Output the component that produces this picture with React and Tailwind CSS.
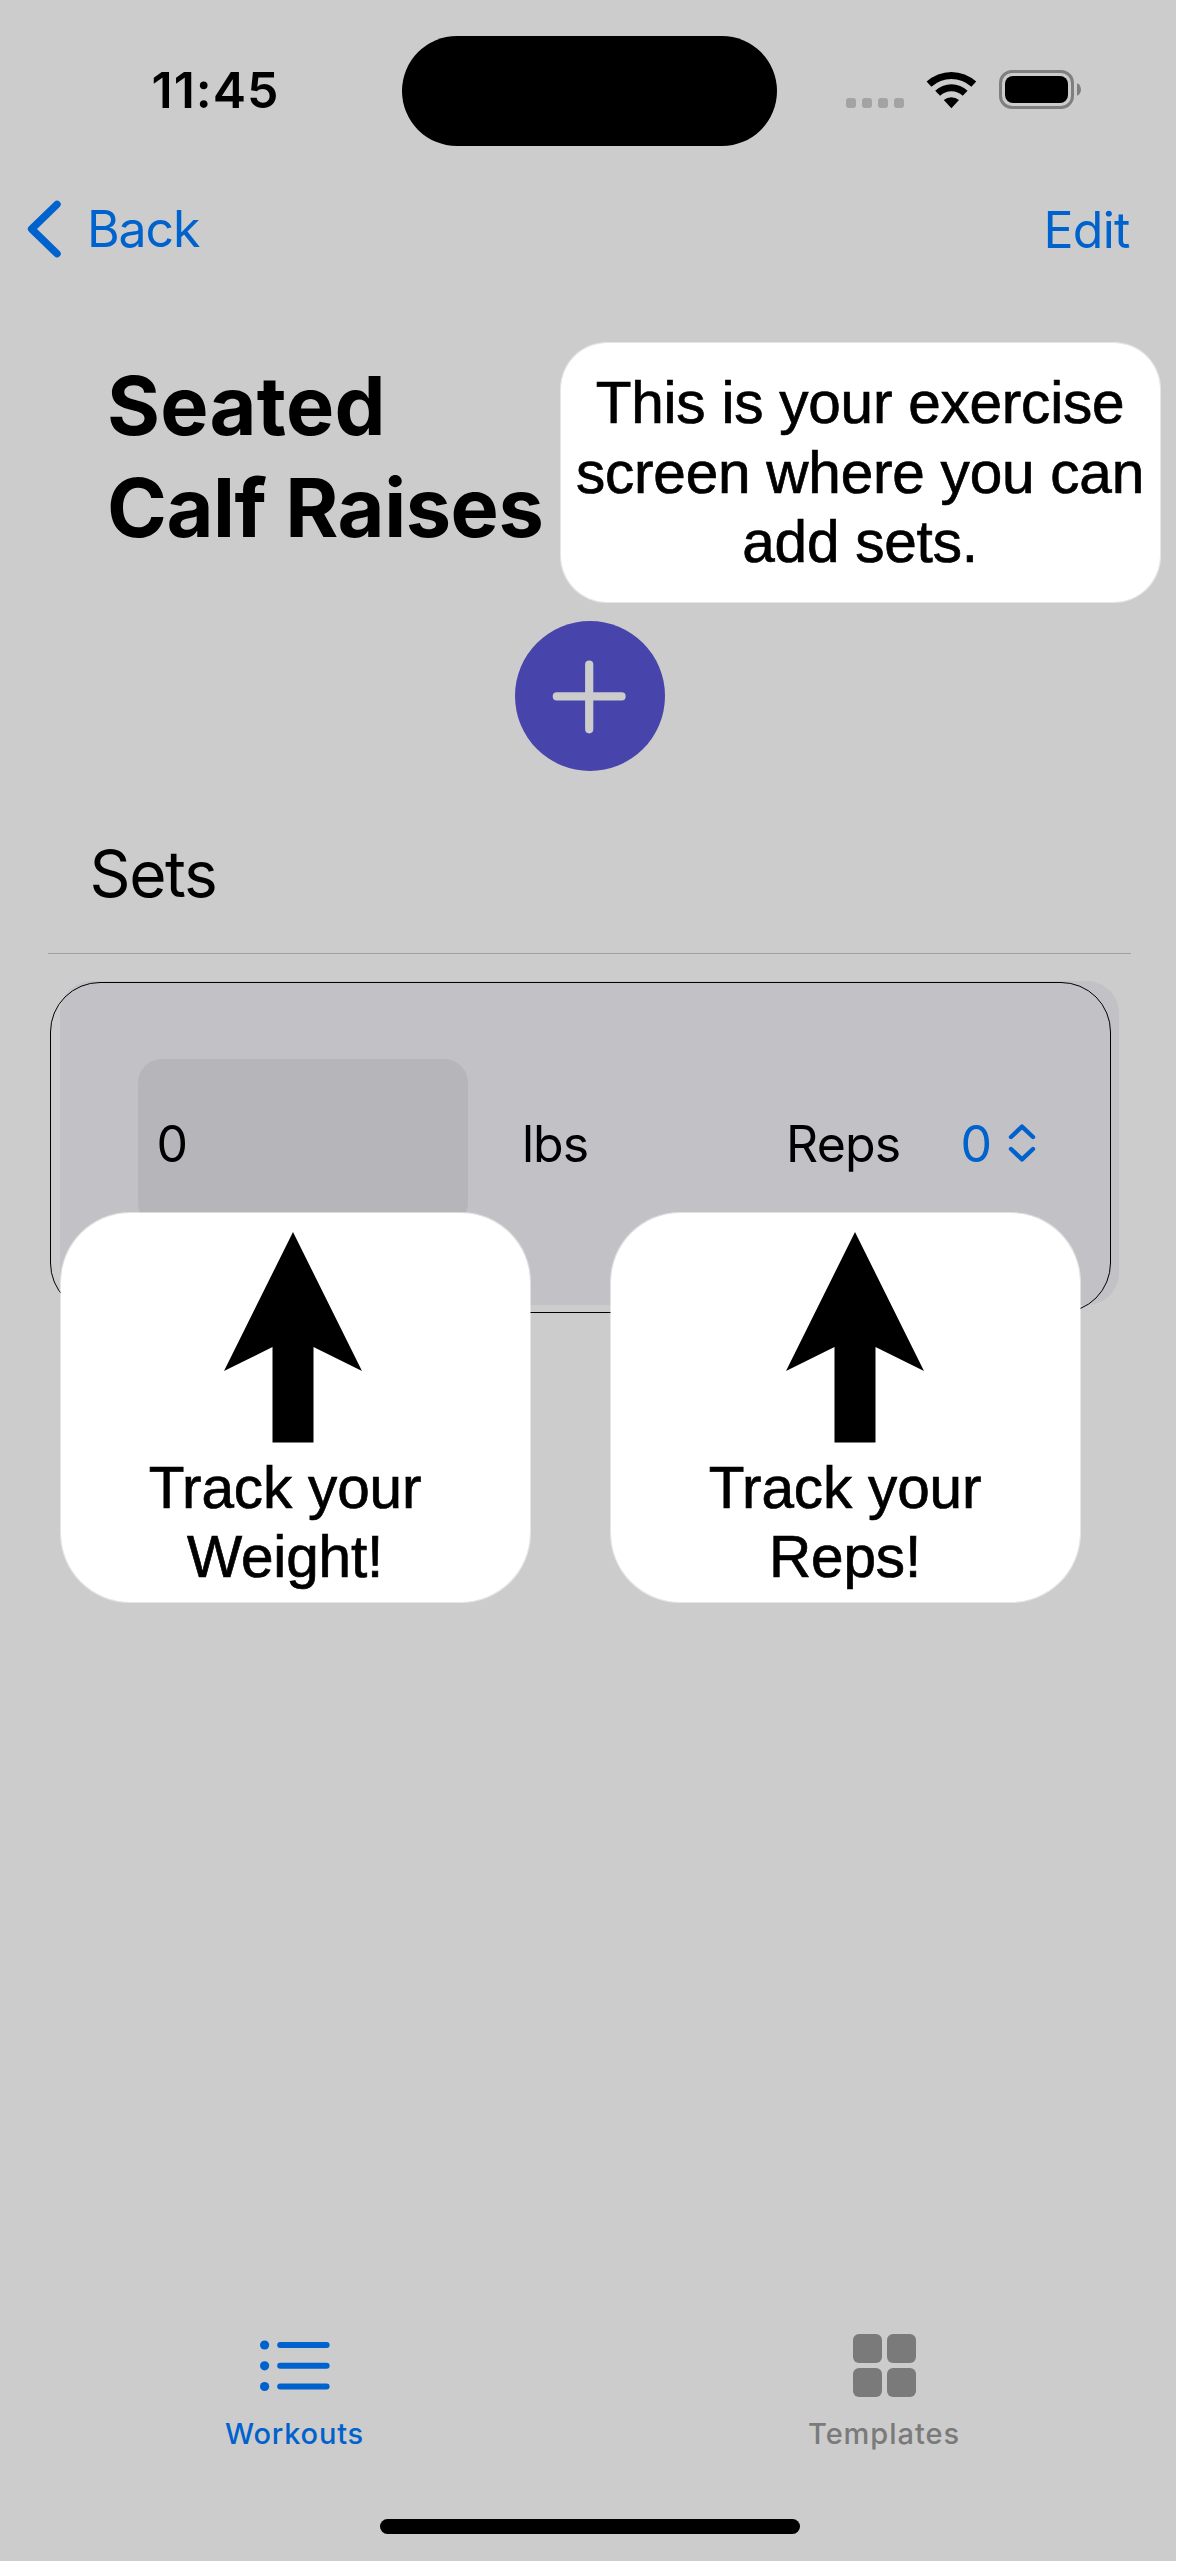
import React from "react";

const BLUE = "#0062cc";

function WifiIcon() {
  return (
    <svg width="51" height="38" viewBox="0 0 51 38" fill="#000">
      <path d="M0.6 10.6 A36.5 36.5 0 0 1 50.2 10.6 L45.4 15.7 A29.5 29.5 0 0 0 5.4 15.7 Z" />
      <path d="M9.2 19.8 A23.5 23.5 0 0 1 41.6 19.8 L36.7 24.8 A16.4 16.4 0 0 0 14.1 24.8 Z" />
      <path d="M17.8 29 A12 12 0 0 1 33 29 L25.4 37.2 Z" />
    </svg>
  );
}

function BatteryIcon() {
  return (
    <svg width="83" height="39" viewBox="0 0 83 39">
      <rect x="1.5" y="1.5" width="72" height="36" rx="11.5" fill="none" stroke="#7f7f7f" strokeWidth="3" />
      <rect x="6" y="6" width="63" height="27" rx="8" fill="#000" />
      <path d="M78 13.2 C83.3 15.5 83.3 23.5 78 25.8 Z" fill="#7f7f7f" />
    </svg>
  );
}

function StatusBar() {
  return (
    <div className="flex h-[182px] items-center">
      <span className="-mt-0.5 w-[402px] pl-[151.5px] text-[50px] leading-[50px] font-semibold tracking-[1px]">
        11:45
      </span>
      <div className="h-[110px] w-[375px] rounded-full bg-black" />
      <div className="mt-6 ml-[69px] flex gap-1.5">
        {[0, 1, 2, 3].map((i) => (
          <span key={i} className="size-2.5 rounded-[3px] bg-[#a3a3a3]" />
        ))}
      </div>
      <div className="-mt-[3px] ml-[22px]">
        <WifiIcon />
      </div>
      <div className="-mt-[3px] ml-[22px]">
        <BatteryIcon />
      </div>
    </div>
  );
}

function NavBar() {
  return (
    <div className="flex h-[94px] items-center justify-between pr-[46.5px] pl-[27px] text-[50px] leading-[50px] text-[#0062cc]">
      <button className="flex items-center gap-[26px]">
        <svg width="34" height="58" viewBox="0 0 34 58" fill="none">
          <path d="M30 4.3 L4.6 29 L30 53.7" stroke={BLUE} strokeWidth="7.4" strokeLinecap="round" strokeLinejoin="round" />
        </svg>
        <span className="tracking-[-1.1px]">Back</span>
      </button>
      <button className="pt-0.5 tracking-[-0.8px]">Edit</button>
    </div>
  );
}

function CoachArrow() {
  return (
    <svg width="138" height="211" viewBox="0 0 138 211" fill="#000">
      <path d="M69 0 L138 139 L89.5 115 V210.5 H48.5 V115 L0 139 Z" />
    </svg>
  );
}

const COACH_TEXT =
  "font-['Liberation_Sans',sans-serif] text-[58.5px] text-center [-webkit-text-stroke:0.7px_#000]";

function UpDownIcon() {
  return (
    <svg width="28" height="38" viewBox="0 0 28 38" fill="none" stroke={BLUE} strokeWidth="4.4" strokeLinecap="round" strokeLinejoin="round">
      <path d="M3 13 L14 2.6 L25 13" />
      <path d="M3 25 L14 35.4 L25 25" />
    </svg>
  );
}

function SetCard() {
  return (
    <div className="relative mt-[27px] ml-[60px] flex h-[324px] w-[1059px] items-center rounded-[32px] bg-[#c2c1c6] pl-[78px] text-[50px] leading-[50px]">
      <div className="flex h-[168px] w-[330px] items-center rounded-[24px] bg-[#b6b5ba] pt-0.5 pl-[18.5px]">0</div>
      <span className="ml-[54px] w-[264px] pt-0.5 tracking-[-1px]">lbs</span>
      <span className="w-[174.5px] pt-0.5 tracking-[-0.8px]">Reps</span>
      <span className="w-[47.5px] pt-0.5 text-[#0062cc]">0</span>
      <UpDownIcon />
      <div className="absolute top-px -left-2.5 h-[331px] w-[1061px] rounded-[50px] border border-black" />
    </div>
  );
}

function ListIcon() {
  return (
    <svg width="70" height="63" viewBox="0 0 70 63" fill={BLUE}>
      {[11, 31.8, 52.5].map((y) => (
        <g key={y}>
          <circle cx="4.6" cy={y} r="4.6" />
          <rect x="17.2" y={y - 3} width="52.4" height="6" rx="3" />
        </g>
      ))}
    </svg>
  );
}

function GridIcon() {
  return (
    <div className="grid grid-cols-2 gap-[5px]">
      {[0, 1, 2, 3].map((i) => (
        <span key={i} className="size-[29px] rounded-[6px] bg-[#7a7a7a]" />
      ))}
    </div>
  );
}

export default function App() {
  return (
    <div className="h-[2561px] w-[1180px] overflow-hidden bg-white pr-1">
      <div className="flex h-full w-[1176px] flex-col bg-[#cccccc] font-['Inter',sans-serif] text-black">
        <StatusBar />
        <NavBar />

        <div className="flex items-start">
          <h1 className="mt-[79px] w-[560px] pl-[107px] text-[81px] leading-[102px] font-bold whitespace-nowrap">
            <span className="block tracking-[0.25px]">Seated</span>
            <span className="block tracking-[-0.43px]">Calf Raises</span>
          </h1>
          <div className="mt-[66px] h-[261px] w-[601px] rounded-[47px] border border-white/50 bg-white bg-clip-padding pt-[25px]">
            <p className={`${COACH_TEXT} -ml-px leading-[69.5px] tracking-[-0.22px]`}>
              This is your exercise
              <br />
              screen where you can
              <br />
              add sets.
            </p>
          </div>
        </div>

        <button className="mt-[18px] ml-[515px] flex size-[150px] items-center justify-center rounded-full bg-[#4745ab]">
          <svg width="150" height="150" viewBox="0 0 150 150" stroke="#cccccc" strokeWidth="8.2" strokeLinecap="round">
            <path d="M74.2 43.5 V108.3 M41.8 75.4 H106.6" />
          </svg>
        </button>

        <h2 className="mt-[71px] pl-[89.5px] text-[64px] leading-[64px] tracking-[-1.4px]">Sets</h2>
        <div className="mt-[47px] ml-12 h-px w-[1083px] shrink-0 bg-[#a0a0a0]" />

        <SetCard />

        <div className="relative -mt-[93px] flex gap-[79px] pl-[60px]">
          <div className="flex h-[391px] w-[471px] flex-col rounded-[70px] border border-white/50 bg-white bg-clip-padding pt-[19px]">
            <div className="pl-[163px]">
              <CoachArrow />
            </div>
            <p className={`${COACH_TEXT} mt-2.5 pr-[21px] leading-[69px] tracking-[-0.15px]`}>
              Track your
              <br />
              Weight!
            </p>
          </div>
          <div className="flex h-[391px] w-[471px] flex-col rounded-[70px] border border-white/50 bg-white bg-clip-padding pt-[19px]">
            <div className="pl-[175px]">
              <CoachArrow />
            </div>
            <p className={`${COACH_TEXT} mt-2.5 pr-px leading-[69px] tracking-[-0.15px]`}>
              Track your
              <br />
              Reps!
            </p>
          </div>
        </div>

        <nav className="mt-auto -mr-1 flex h-[118px] shrink-0 text-[29px] leading-9 font-medium">
          <div className="flex w-[589px] flex-col items-center text-[#0062cc]">
            <ListIcon />
            <span className="mt-[19px] tracking-[0.8px]">Workouts</span>
          </div>
          <div className="flex w-[590px] flex-col items-center text-[#7a7a7a]">
            <GridIcon />
            <span className="mt-[19px] tracking-[0.95px]">Templates</span>
          </div>
        </nav>
        <div className="mt-[67px] mb-[27px] ml-[380px] h-[15px] w-[420px] shrink-0 rounded-full bg-black" />
      </div>
    </div>
  );
}
